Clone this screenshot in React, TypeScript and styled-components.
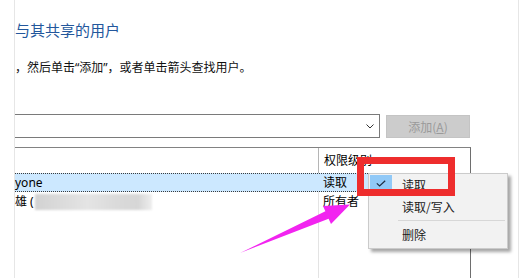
import React from "react";
import styled, { createGlobalStyle } from "styled-components";

const Global = createGlobalStyle`
  html, body { margin: 0; padding: 0; background: #fff; }
  body { font-family: "Noto Sans", "Noto Sans CJK SC", sans-serif; }
`;

const Page = styled.div`
  position: relative;
  width: 525px;
  height: 278px;
  overflow: hidden;
  background: #fff;
  display: flex;
`;

const Panel = styled.div`
  box-sizing: border-box;
  margin-left: 14px;
  width: 505px;
  height: 100%;
  border-left: 1px solid #e6e6e6;
  border-right: 1px solid #e6e6e6;
  display: flex;
  flex-direction: column;
`;

const Title = styled.div`
  margin-top: 20px;
  font-family: "Noto Sans CJK SC", sans-serif;
  font-size: 15px;
  line-height: 20px;
  color: #23579c;
  white-space: nowrap;
`;

const Hint = styled.div`
  margin-top: 20px;
  font-family: "Noto Sans", "Noto Sans CJK SC", sans-serif;
  font-size: 12px;
  line-height: 16px;
  color: #111;
  white-space: nowrap;
`;

const PickRow = styled.div`
  margin-top: 38px;
  display: flex;
  align-items: flex-end;
  gap: 6px;
`;

const Combo = styled.div`
  box-sizing: border-box;
  width: 365px;
  height: 24px;
  border: 1px solid #7a7a7a;
  border-left: none;
  display: flex;
  align-items: center;
  justify-content: flex-end;
  padding-right: 5px;
  background: #fff;
`;

const AddButton = styled.div`
  box-sizing: border-box;
  width: 84px;
  height: 23px;
  background: #cccccc;
  border: 1px solid #c4c4c4;
  display: flex;
  align-items: center;
  justify-content: center;
  font-family: "Noto Sans CJK SC", sans-serif;
  font-size: 12px;
  color: #9a9a9a;
  u { text-decoration: underline; }
`;

const List = styled.div`
  box-sizing: border-box;
  margin-top: 9px;
  width: 456px;
  flex: 1;
  border-top: 1px solid #828282;
  border-right: 1px solid #6e6e6e;
  background-image: linear-gradient(
    to right,
    transparent 303px,
    #e3e3e3 303px,
    #e3e3e3 304px,
    transparent 304px
  );
  font-size: 12px;
  color: #000;
`;

const Row = styled.div<{ $selected?: boolean; $header?: boolean }>`
  box-sizing: border-box;
  display: grid;
  grid-template-columns: 303px 1fr;
  align-items: center;
  height: ${(p) => (p.$header ? "25px" : p.$selected ? "19px" : "20px")};
  background: ${(p) => (p.$selected ? "#cce8ff" : "transparent")};
  border-top: ${(p) => (p.$selected ? "1px dotted #3c3c3c" : "none")};
  border-bottom: ${(p) => (p.$selected ? "1px dotted #3c3c3c" : "none")};
`;

const Cell = styled.div<{ $second?: boolean; $header?: boolean }>`
  display: flex;
  align-items: center;
  height: 100%;
  padding-left: ${(p) => (p.$second ? "5px" : "0")};
  border-left: ${(p) => (p.$second && p.$header ? "1px solid #b5b5b5" : "none")};
  box-sizing: border-box;
  white-space: nowrap;
  font-family: "Noto Sans", "Noto Sans CJK SC", sans-serif;
  font-size: 12px;
  line-height: 16px;
  color: #000;
`;

const Blurred = styled.span`
  display: inline-block;
  width: 117px;
  height: 16px;
  margin-left: 1px;
  background: linear-gradient(
    to right,
    #d2d2d2 0%,
    #dcdcdc 25%,
    #e4e4e4 45%,
    #dadada 70%,
    #d6d6d6 88%,
    #eeeeee 100%
  );
  filter: blur(0.8px);
`;

const Menu = styled.div`
  position: absolute;
  left: 368px;
  top: 173px;
  width: 140px;
  height: 76px;
  box-sizing: border-box;
  background: #f2f2f2;
  border: 1px solid #cbcbcb;
  box-shadow: 3px 3px 3px rgba(0, 0, 0, 0.35);
  display: flex;
  flex-direction: column;
`;

const MenuItem = styled.div<{ $h: number }>`
  position: relative;
  height: ${(p) => p.$h}px;
  display: flex;
  align-items: center;
  padding-left: 33px;
  font-family: "Noto Sans CJK SC", sans-serif;
  font-size: 12px;
  color: #1a1a1a;
  white-space: nowrap;
`;

const CheckBox = styled.div`
  position: absolute;
  left: 1px;
  top: 1px;
  width: 22px;
  height: 16px;
  background: #91c9f7;
  display: flex;
  align-items: center;
  justify-content: center;
`;

const Separator = styled.div`
  height: 1px;
  margin: 3px 2px 3px 29px;
  background: #d7d7d7;
`;

const Highlight = styled.div`
  position: absolute;
  left: 357px;
  top: 157px;
  width: 98px;
  height: 39px;
  box-sizing: border-box;
  border: 7px solid #ee2d2d;
`;

const Overlay = styled.svg`
  position: absolute;
  left: 0;
  top: 0;
  pointer-events: none;
`;

export default function App() {
  return (
    <>
      <Global />
      <Page>
        <Panel>
          <Title>与其共享的用户</Title>
          <Hint>，然后单击“添加”，或者单击箭头查找用户。</Hint>
          <PickRow>
            <Combo>
              <svg width="8" height="5" viewBox="0 0 8 5">
                <path d="M0.5 0.5 L4 4 L7.5 0.5" fill="none" stroke="#333" strokeWidth="1" />
              </svg>
            </Combo>
            <AddButton>
              添加(<u>A</u>)
            </AddButton>
          </PickRow>
          <List>
            <Row $header>
              <Cell $header />
              <Cell $second $header>权限级别</Cell>
            </Row>
            <Row $selected>
              <Cell>yone</Cell>
              <Cell $second>读取</Cell>
            </Row>
            <Row>
              <Cell>
                雄 (<Blurred />
              </Cell>
              <Cell $second>所有者</Cell>
            </Row>
          </List>
        </Panel>

        <Menu>
          <MenuItem $h={21}>
            <CheckBox>
              <svg width="10" height="7" viewBox="0 0 10 7">
                <path d="M0.8 3.4 L3.6 6 L9.2 0.8" fill="none" stroke="#1f2f45" strokeWidth="1.2" />
              </svg>
            </CheckBox>
            读取
          </MenuItem>
          <MenuItem $h={22}>读取/写入</MenuItem>
          <Separator />
          <MenuItem $h={21}>删除</MenuItem>
        </Menu>

        <Highlight />

        <Overlay width="525" height="278" viewBox="0 0 525 278">
          <polygon
            points="240,253 325.4,211.3 323,206 350,204.5 331,224 328.6,218.7"
            fill="#f224f0"
          />
        </Overlay>
      </Page>
    </>
  );
}
